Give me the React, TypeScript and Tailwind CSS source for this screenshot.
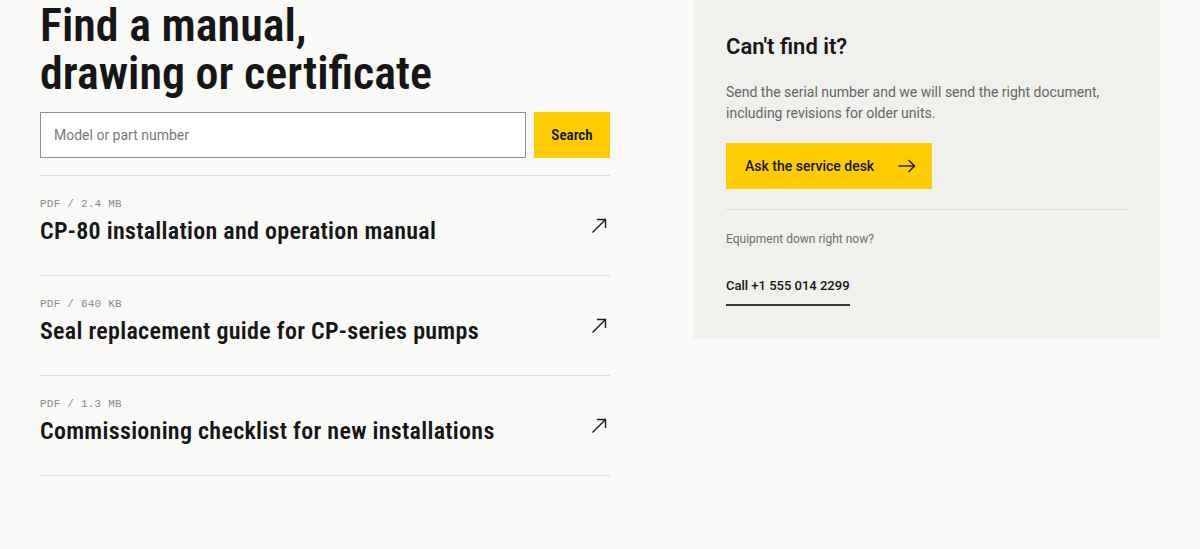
import type { ReactNode } from 'react'

const docs = [
  { meta: 'PDF / 2.4 MB', title: 'CP-80 installation and operation manual' },
  { meta: 'PDF / 640 KB', title: 'Seal replacement guide for CP-series pumps' },
  { meta: 'PDF / 1.3 MB', title: 'Commissioning checklist for new installations' },
]

// Roboto's width axis gives the narrow display face used for headings
const condensed = "font-['Roboto',sans-serif] [font-stretch:80%]"

function ArrowUpRight() {
  return (
    <svg width="16" height="16" viewBox="0 0 16 16" fill="none" stroke="#1a1a1a" strokeWidth="1.4">
      <path d="M1.5 14.5 14.5 1.5" />
      <path d="M6 1.5h8.5V10" />
    </svg>
  )
}

function ArrowRight() {
  return (
    <svg width="18" height="14" viewBox="0 0 18 14" fill="none" stroke="#1a1a1a" strokeWidth="1.4">
      <path d="M0.5 7h16" />
      <path d="M10.5 1 16.5 7l-6 6" />
    </svg>
  )
}

function DocRow({ meta, title }: { meta: string; title: ReactNode }) {
  return (
    <a href="#" className="flex items-start justify-between border-b border-[#dcdcd8] pt-5 pb-[29px]">
      <div>
        <p className="font-['Liberation_Mono',monospace] text-[11px] leading-4 tracking-[0.02em] text-[#8a8a8a]">
          {meta}
        </p>
        <h3 className={`${condensed} mt-1 text-[24px] leading-[30px] font-semibold tracking-[0.012em] text-[#161616]`}>
          {title}
        </h3>
      </div>
      <span className="mt-[22px] mr-[3px]">
        <ArrowUpRight />
      </span>
    </a>
  )
}

export default function App() {
  return (
    <div className="min-h-screen bg-[#f9f9f7] font-['Roboto',sans-serif] text-[#161616]">
      <div className="grid grid-cols-[570px_466px] gap-x-[84px] px-10">
        <section className="pt-px">
          <h1 className={`${condensed} text-[46px] leading-[48px] font-semibold`}>
            Find a manual,
            <br />
            drawing or certificate
          </h1>

          <form className="mt-[15px] flex gap-2" onSubmit={(e) => e.preventDefault()}>
            <input
              type="text"
              placeholder="Model or part number"
              className="h-[46px] flex-1 border border-[#8d8d8d] bg-white px-[13px] text-[14px] text-[#161616] outline-none placeholder:text-[#7a7a7a]"
            />
            <button
              type="submit"
              className={`${condensed} h-[46px] w-[76px] bg-[#ffcc00] text-[15px] font-semibold text-[#161616]`}
            >
              Search
            </button>
          </form>

          <div className="mt-[17px] border-t border-[#dcdcd8]">
            {docs.map((d) => (
              <DocRow key={d.title} meta={d.meta} title={d.title} />
            ))}
          </div>
        </section>

        <aside className="self-start bg-[#f0f0ec] px-8 pt-[33px] pb-[33px]">
          <h2 className="text-[22px] leading-7 font-semibold">Can't find it?</h2>
          <p className="mt-[21px] text-[14px] leading-[21px] text-[#666666]">
            Send the serial number and we will send the right document,
            <br />
            including revisions for older units.
          </p>

          <a
            href="#"
            className="mt-[19px] inline-flex h-[46px] items-center gap-6 bg-[#ffcc00] pr-4 pl-[19px] text-[14px] font-medium text-[#161616]"
          >
            Ask the service desk
            <ArrowRight />
          </a>

          <div className="mt-5 border-t border-[#dcdcd8] pt-[20px]">
            <p className="text-[12px] leading-[18px] text-[#6f6f6f]">Equipment down right now?</p>
            <a
              href="#"
              className="mt-[28px] inline-block border-b-2 border-[#333333] pb-2 text-[13px] leading-5 font-medium text-[#161616]"
            >
              Call +1 555 014 2299
            </a>
          </div>
        </aside>
      </div>
    </div>
  )
}
